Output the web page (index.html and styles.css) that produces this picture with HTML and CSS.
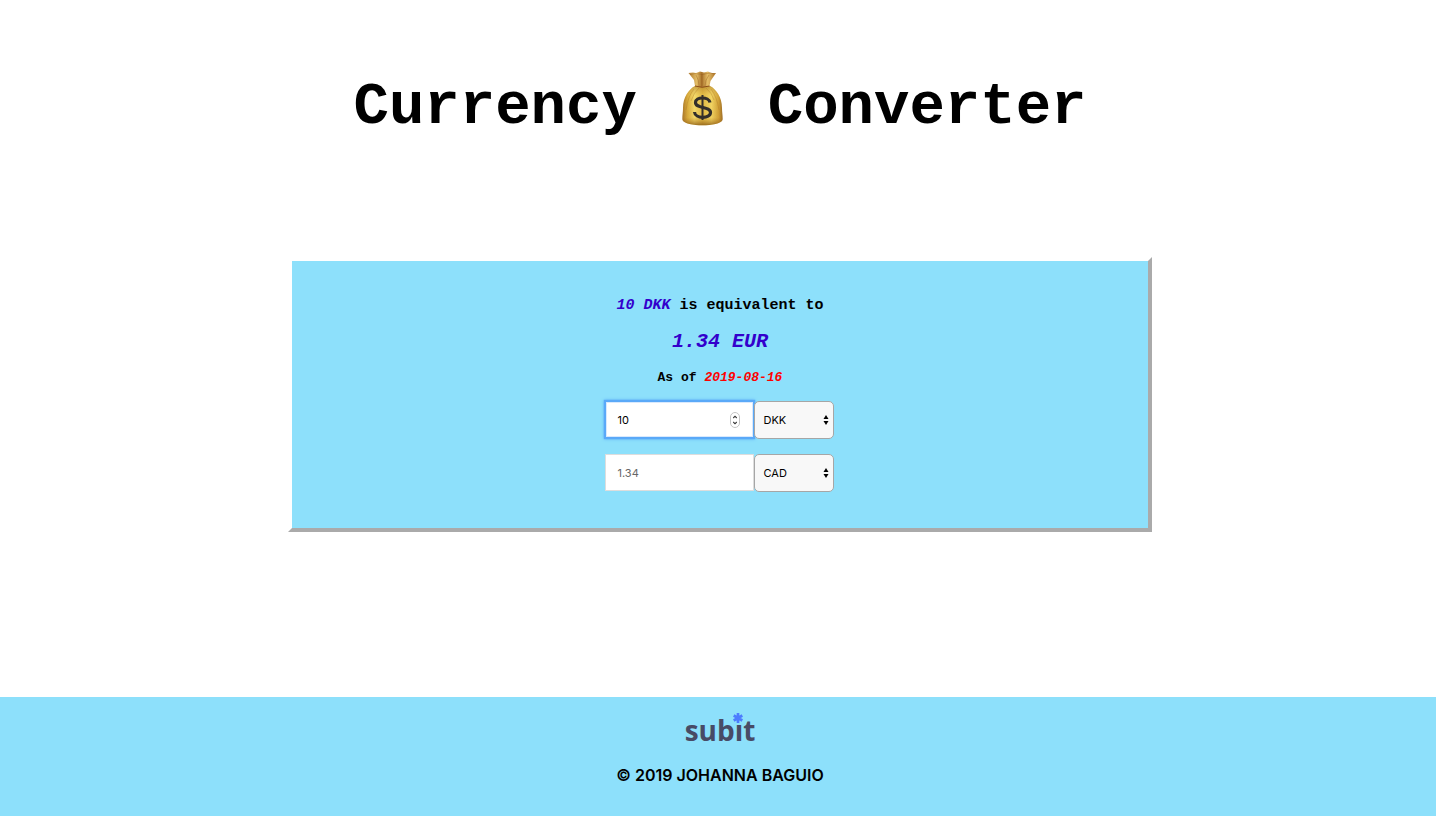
FILE: index.html
```html
<!DOCTYPE html>
<html lang="en">
<head>
<meta charset="utf-8">
<title>Currency Converter</title>
<link rel="stylesheet" href="styles.css">
</head>
<body>
<header class="header">
  <h1 class="title">
    <span>Currency</span>
    <svg class="bag" viewBox="0 0 41 55" role="img" aria-label="money bag">
      <defs>
        <linearGradient id="sack" x1="0" x2="1" y1="0" y2="0">
          <stop offset="0" stop-color="#a8762a"/>
          <stop offset=".13" stop-color="#d9ac3c"/>
          <stop offset=".3" stop-color="#f3da6c"/>
          <stop offset=".5" stop-color="#e0b944"/>
          <stop offset=".72" stop-color="#f2d563"/>
          <stop offset=".9" stop-color="#d0a036"/>
          <stop offset="1" stop-color="#9d6c26"/>
        </linearGradient>
        <linearGradient id="shade" x1="0" x2="0" y1="0" y2="1">
          <stop offset="0" stop-color="#8c5716" stop-opacity=".45"/>
          <stop offset=".25" stop-color="#c99030" stop-opacity="0"/>
          <stop offset=".8" stop-color="#b67b22" stop-opacity=".05"/>
          <stop offset="1" stop-color="#80500f" stop-opacity=".75"/>
        </linearGradient>
        <linearGradient id="neck" x1="0" x2="1" y1="0" y2="0">
          <stop offset="0" stop-color="#b07c30"/>
          <stop offset=".3" stop-color="#e2bc66"/>
          <stop offset=".48" stop-color="#a9722a"/>
          <stop offset=".7" stop-color="#e6bf68"/>
          <stop offset="1" stop-color="#a97028"/>
        </linearGradient>
      </defs>
      <path d="M13 15C7 18 1 26 1 37c0 5-1 9-.5 12C3 56 38 56 40.500 49 41 46 40 42 40 37 40 26 34 18 28 15Z" fill="url(#sack)"/>
      <path d="M13 15C7 18 1 26 1 37c0 5-1 9-.5 12C3 56 38 56 40.500 49 41 46 40 42 40 37 40 26 34 18 28 15Z" fill="url(#shade)"/>
      <path d="M12 18Q6 25 4 39M17 17Q12 21 9 30M24 17Q30 22 32 29M29 18Q35 26 37 39" fill="none" stroke="#a97322" stroke-opacity=".35"/>
      <path d="M6.500 2 11 1.500 14 2 18 .5 22 1.500 26 .5 29 2 34 2 28.500 10 27.500 15Q20 17.500 13 15L12 9Z" fill="url(#neck)"/>
      <path d="M8 3.500Q13 2 17 3T25 2.500 32 3M14 4Q17 9 17 15M20 3V15M27 4Q23 9 23 15" fill="none" stroke="#8b5418" stroke-opacity=".35"/>
      <path d="M13 15Q20 17.500 27.500 15" fill="none" stroke="#8b4d18"/>
      <path d="M28 31.500C27 25.500 13.500 25.500 13.500 31.500c0 6.500 15 3.500 15 10C28.500 48 13 48 12.500 41" fill="none" stroke="#332f2b" stroke-width="3.200"/>
      <path d="M20.500 24V49" stroke="#332f2b" stroke-width="2"/>
    </svg>
    <span>Converter</span>
  </h1>
</header>
<main class="converter">
  <h2 class="line line-from"><em>10 DKK</em> is equivalent to</h2>
  <h2 class="line line-result"><em>1.34 EUR</em></h2>
  <h2 class="line line-date">As of <em class="date">2019-08-16</em></h2>
  <form class="form">
    <div class="row">
      <div class="amount-wrap">
        <input class="amount amount-active" type="number" value="10" aria-label="Amount to convert">
        <svg class="spinner" viewBox="0 0 10 16" aria-hidden="true">
          <rect x=".5" y=".5" width="9" height="15" rx="4.500" fill="#fff" stroke="#c4c4c4"/>
          <path d="M3.300 6 5 4.200 6.700 6M3.300 10 5 11.800 6.700 10" fill="none" stroke="#333" stroke-width="1.100"/>
        </svg>
      </div>
      <div class="select-wrap">
        <select class="currency" aria-label="From currency"><option>DKK</option><option>CAD</option><option>EUR</option></select>
        <svg class="arrows" viewBox="0 0 6 10" aria-hidden="true"><path d="M.5 4 3 0 5.500 4ZM.5 6 3 10 5.500 6Z"/></svg>
      </div>
    </div>
    <div class="row">
      <div class="amount-wrap">
        <input class="amount" type="number" placeholder="1.34" aria-label="Converted amount" readonly>
      </div>
      <div class="select-wrap">
        <select class="currency" aria-label="To currency"><option>CAD</option><option>DKK</option><option>EUR</option></select>
        <svg class="arrows" viewBox="0 0 6 10" aria-hidden="true"><path d="M.5 4 3 0 5.500 4ZM.5 6 3 10 5.500 6Z"/></svg>
      </div>
    </div>
  </form>
</main>
<footer class="footer">
  <div class="logo" role="img" aria-label="subit">subıt<svg class="star" viewBox="0 0 10 10" aria-hidden="true"><path d="M5 0V10M.7 2.500 9.300 7.500M9.300 2.500.7 7.500" stroke="#4d7cfe" stroke-width="2.700"/></svg></div>
  <p class="copyright">© 2019 JOHANNA BAGUIO</p>
</footer>
</body>
</html>
```
FILE: styles.css
```css
* { box-sizing: border-box; }

body {
  margin: 0;
  min-height: 100vh;
  display: flex;
  flex-direction: column;
  background: #fff;
  color: #000;
  font-family: Inter, sans-serif;
}

.header { padding: 71px 0 0 4px; }

.title {
  margin: 0;
  display: flex;
  justify-content: center;
  font: bold 59px/74px "Courier New", Courier, "Liberation Mono", monospace;
}

.bag {
  width: 41px;
  height: 55px;
  margin: 0 45px;
}

.converter {
  width: calc(60% + 2px);
  margin: 112px 0 0 calc(20% + 1px);
  padding: 36px 0;
  border: 4px solid transparent;
  border-right-color: #aaa;
  border-bottom-color: #aaa;
  background: #8de0fb padding-box;
}

.line {
  margin: 0 0 16px;
  text-align: center;
  font-family: "Courier New", Courier, "Liberation Mono", monospace;
  font-weight: bold;
}

.line em { color: #30c; }
.line .date { color: #f00; }
.line-from { font-size: 15px; line-height: 18px; }
.line-result { font-size: 20px; line-height: 22px; }
.line-date { margin-bottom: 14px; font-size: 13px; line-height: 18px; }

.form {
  display: flex;
  flex-direction: column;
  align-items: center;
  gap: 15px;
}

.row { display: flex; }

.amount-wrap,
.select-wrap { position: relative; }

.amount {
  display: block;
  width: 149px;
  height: 37px;
  padding: 0 11px;
  border: 1px solid #ddd;
  background: #fff;
  color: #000;
  font: 11px Inter, sans-serif;
  outline: 0;
  appearance: textfield;
}

.amount::-webkit-inner-spin-button { appearance: none; }
.amount::placeholder { color: #666; }

.amount-active {
  border: 1px solid #5aa9f8;
  box-shadow: 0 0 1px 1px #5aa9f8, 0 0 3px 1px #5aa9f8, inset 0 0 0 1px #d9e9fd;
}

.spinner {
  position: absolute;
  right: 14px;
  top: 11px;
  width: 10px;
  height: 16px;
}

.currency {
  display: block;
  width: 80px;
  height: 38px;
  padding: 0 8px;
  border: 1px solid #a6a6a6;
  border-radius: 5px;
  background: #f8f8f8;
  color: #000;
  font: 11px Inter, sans-serif;
  appearance: none;
}

.arrows {
  position: absolute;
  right: 5px;
  top: 14px;
  width: 6px;
  height: 10px;
}

.footer {
  margin-top: auto;
  height: 119px;
  padding: 12px 0 0 4px;
  background: #8de0fb;
  display: flex;
  flex-direction: column;
  align-items: center;
}

.logo {
  position: relative;
  color: #484b66;
  font: 700 28px/42px "Open Sans", sans-serif;
}

.star {
  position: absolute;
  right: 12px;
  top: 4px;
  width: 10px;
  height: 10px;
}

.copyright {
  margin: 14px 0 0;
  font-size: 16px;
  line-height: 20px;
  font-weight: 600;
}
```
